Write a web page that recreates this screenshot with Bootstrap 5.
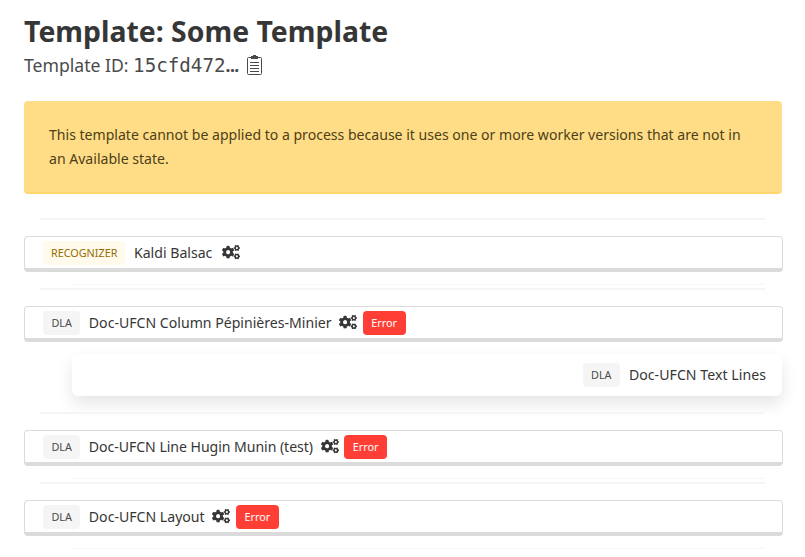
<!DOCTYPE html>
<html lang="en">
<head>
<meta charset="utf-8">
<title>Template</title>
<link href="https://cdn.jsdelivr.net/npm/bootstrap@5.3.0/dist/css/bootstrap.min.css" rel="stylesheet">
<style>
body { font-family: "Noto Sans", sans-serif; color: #363636; background: #fff; font-size: 14.1px; overflow: hidden; height: 557px; }
.page-wrap { padding: 13px 22px 0 24px; }
.tpl-title { font-size: 28.4px; font-weight: 700; line-height: 36px; margin: 0; color: #363636; }
.tpl-sub { font-size: 17.6px; line-height: 28px; color: #4a4a4a; margin-top: 2px; white-space: nowrap; }
.tpl-mono { font-family: "DejaVu Sans Mono", monospace; font-size: 19.2px; }
.tpl-dots { font-weight: 700; letter-spacing: -.6px; }
.tpl-alert { background: #ffdd87; border: 0; border-bottom: 2px solid #ffd76e; border-radius: 4px; margin: 21px 1px 24px 0; padding: 22px 25px 21px; font-size: 14.07px; line-height: 24px; color: #4d3f17; height: 93px; }
.tpl-rule { height: 2px; background: #f5f5f5; margin: 0 18px 0 16px; }
.tpl-rule-top { margin-bottom: 16px; }
.tpl-node { height: 36px; border: 1px solid #dbdbdb; border-bottom-width: 4px; border-radius: 4px; background: #fff; padding-left: 18px; gap: 8.6px; white-space: nowrap; margin-bottom: 12px; }
.tpl-tag { font-size: 10.8px; line-height: 24px; height: 24px; padding: 0 8.4px; border-radius: 4px; background: #f5f5f5; color: #4a4a4a; }
.tpl-tag-rec { background: #fffaeb; color: #946c00; padding: 0 8px; }
.tpl-err { font-size: 10.8px; line-height: 24px; height: 24px; padding: 0 8.6px; border-radius: 4px; background: #ff3e36; color: #fff; margin-left: -3px; }
.tpl-gears { width: 18px; height: 14.4px; fill: #363636; flex: none; }
.tpl-gears-tight { margin-left: -1px; }
.tpl-gears-wide { margin-left: 1px; }
.tpl-name-tight { letter-spacing: -.05px; }
.tpl-name-wide { letter-spacing: .05px; }
.tpl-child { height: 42px; border-radius: 6px; margin: 0 1px 16px 48px; background: #fff; box-shadow: 0 8px 16px rgba(10,10,10,.1), 0 0 1px rgba(10,10,10,.02); padding-right: 16px; gap: 9px; }
.tpl-faint { height: 1px; background: #f7f7f7; margin: 0 18px 3px 47px; }
.tpl-clip { vertical-align: -3px; margin-left: 4px; }
</style>
</head>
<body>
<svg width="0" height="0" class="position-absolute">
  <defs>
    <symbol id="cogs" viewBox="0 0 640 512">
      <path d="M512.1 191l-8.2 14.3c-3 5.3-9.4 7.5-15.1 5.4-11.8-4.4-22.6-10.7-32.1-18.6-4.6-3.8-5.8-10.5-2.8-15.7l8.2-14.3c-6.9-8-12.3-17.3-15.9-27.4h-16.5c-6 0-11.2-4.3-12.2-10.3-2-12-2.1-24.6 0-37.1 1-6 6.2-10.4 12.2-10.4h16.5c3.6-10.1 9-19.4 15.9-27.4l-8.2-14.3c-3-5.2-1.9-11.9 2.8-15.7 9.5-7.9 20.4-14.2 32.1-18.6 5.7-2.1 12.1.1 15.1 5.4l8.2 14.3c10.5-1.9 21.2-1.9 31.7 0L552 6.3c3-5.3 9.4-7.5 15.1-5.4 11.8 4.4 22.6 10.7 32.1 18.6 4.6 3.8 5.8 10.5 2.8 15.7l-8.2 14.3c6.9 8 12.3 17.3 15.9 27.4h16.5c6 0 11.2 4.3 12.2 10.3 2 12 2.1 24.6 0 37.1-1 6-6.2 10.4-12.2 10.4h-16.5c-3.6 10.1-9 19.4-15.9 27.4l8.2 14.3c3 5.2 1.9 11.9-2.8 15.7-9.5 7.9-20.4 14.2-32.1 18.6-5.7 2.1-12.1-.1-15.1-5.4l-8.2-14.3c-10.4 1.9-21.2 1.9-31.7 0zm-10.5-58.8c38.5 29.6 82.4-14.3 52.8-52.8-38.5-29.7-82.4 14.3-52.8 52.8zM386.3 286.1l33.7 16.8c10.1 5.8 14.5 18.1 10.5 29.1-8.9 24.2-26.4 46.4-42.6 65.8-7.4 8.9-20.2 11.1-30.3 5.3l-29.1-16.8c-16 13.7-34.6 24.6-54.9 31.7v33.6c0 11.6-8.3 21.6-19.7 23.6-24.6 4.2-50.4 4.4-75.9 0-11.5-2-20-11.9-20-23.6V418c-20.3-7.2-38.9-18-54.9-31.7L74 403c-10 5.8-22.9 3.6-30.3-5.3-16.2-19.4-33.3-41.6-42.2-65.7-4-10.9.4-23.2 10.5-29.1l33.3-16.8c-3.9-20.9-3.9-42.4 0-63.4L12 205.8c-10.1-5.8-14.6-18.1-10.5-29 8.9-24.2 26-46.4 42.2-65.8 7.4-8.9 20.2-11.1 30.3-5.3l29.1 16.8c16-13.7 34.6-24.6 54.9-31.7V57.1c0-11.5 8.2-21.5 19.6-23.5 24.6-4.2 50.5-4.4 76-.1 11.5 2 20 11.9 20 23.6v33.6c20.3 7.2 38.9 18 54.9 31.7l29.1-16.8c10-5.8 22.9-3.6 30.3 5.3 16.2 19.4 33.2 41.6 42.1 65.8 4 10.9.1 23.2-10 29.1l-33.7 16.8c3.9 21 3.9 42.5 0 63.5zm-117.6 21.1c59.2-77-28.7-164.9-105.7-105.7-59.2 77 28.7 164.9 105.7 105.7zm243.4 182.7l-8.2 14.3c-3 5.3-9.4 7.5-15.1 5.4-11.8-4.4-22.6-10.7-32.1-18.6-4.6-3.8-5.8-10.5-2.8-15.7l8.2-14.3c-6.9-8-12.3-17.3-15.9-27.4h-16.5c-6 0-11.2-4.3-12.2-10.3-2-12-2.1-24.6 0-37.1 1-6 6.2-10.4 12.2-10.4h16.5c3.6-10.1 9-19.4 15.9-27.4l-8.2-14.3c-3-5.2-1.9-11.9 2.8-15.7 9.5-7.9 20.4-14.2 32.1-18.6 5.7-2.1 12.1.1 15.1 5.4l8.2 14.3c10.5-1.9 21.2-1.9 31.7 0l8.2-14.3c3-5.3 9.4-7.5 15.1-5.4 11.8 4.4 22.6 10.7 32.1 18.6 4.6 3.8 5.8 10.5 2.8 15.7l-8.2 14.3c6.9 8 12.3 17.3 15.9 27.4h16.5c6 0 11.2 4.3 12.2 10.3 2 12 2.1 24.6 0 37.1-1 6-6.2 10.4-12.2 10.4h-16.5c-3.6 10.1-9 19.4-15.9 27.4l8.2 14.3c3 5.2 1.9 11.9-2.8 15.7-9.5 7.9-20.4 14.2-32.1 18.6-5.7 2.1-12.1-.1-15.1-5.4l-8.2-14.3c-10.4 1.9-21.2 1.9-31.7 0zM501.6 431c38.5 29.6 82.4-14.3 52.8-52.8-38.5-29.6-82.4 14.3-52.8 52.8z"/>
    </symbol>
  </defs>
</svg>
<div class="page-wrap">
  <h1 class="tpl-title">Template: Some Template</h1>
  <div class="tpl-sub">Template ID: <span class="tpl-mono">15cfd472</span><span class="tpl-dots">...</span>
    <svg class="tpl-clip" width="15" height="20" viewBox="0 0 15 20" fill="none" stroke="#4a4a4a">
      <rect x="0.5" y="2.5" width="14" height="17" rx="1"/>
      <rect x="4.5" y="1.5" width="6" height="2" fill="#4a4a4a"/>
      <rect x="6" y="0" width="3" height="2" fill="#4a4a4a" stroke="none"/>
      <path d="M3 7.5h9M3 10.5h9M3 13.5h9M3 16.5h9"/>
    </svg>
  </div>
  <div class="tpl-alert">This template cannot be applied to a process because it uses one or more worker versions that are not in an Available state.</div>

  <div class="tpl-rule tpl-rule-top"></div>
  <div class="tpl-node d-flex align-items-center">
    <span class="tpl-tag tpl-tag-rec">RECOGNIZER</span><span>Kaldi Balsac</span>
    <svg class="tpl-gears tpl-gears-wide"><use href="#cogs"/></svg>
  </div>
  <div class="tpl-faint"></div>
  <div class="tpl-rule tpl-rule-top"></div>
  <div class="tpl-node d-flex align-items-center">
    <span class="tpl-tag">DLA</span><span>Doc-UFCN Column Pépinières-Minier</span>
    <svg class="tpl-gears tpl-gears-tight"><use href="#cogs"/></svg><span class="tpl-err">Error</span>
  </div>
  <div class="tpl-child d-flex align-items-center justify-content-end">
    <span class="tpl-tag">DLA</span><span class="tpl-name-wide">Doc-UFCN Text Lines</span>
  </div>
  <div class="tpl-rule tpl-rule-top"></div>
  <div class="tpl-node d-flex align-items-center">
    <span class="tpl-tag">DLA</span><span class="tpl-name-tight">Doc-UFCN Line Hugin Munin (test)</span>
    <svg class="tpl-gears tpl-gears-tight"><use href="#cogs"/></svg><span class="tpl-err">Error</span>
  </div>
  <div class="tpl-faint"></div>
  <div class="tpl-rule tpl-rule-top"></div>
  <div class="tpl-node d-flex align-items-center">
    <span class="tpl-tag">DLA</span><span>Doc-UFCN Layout</span>
    <svg class="tpl-gears tpl-gears-tight"><use href="#cogs"/></svg><span class="tpl-err">Error</span>
  </div>
  <div class="tpl-faint"></div>
</div>
</body>
</html>
